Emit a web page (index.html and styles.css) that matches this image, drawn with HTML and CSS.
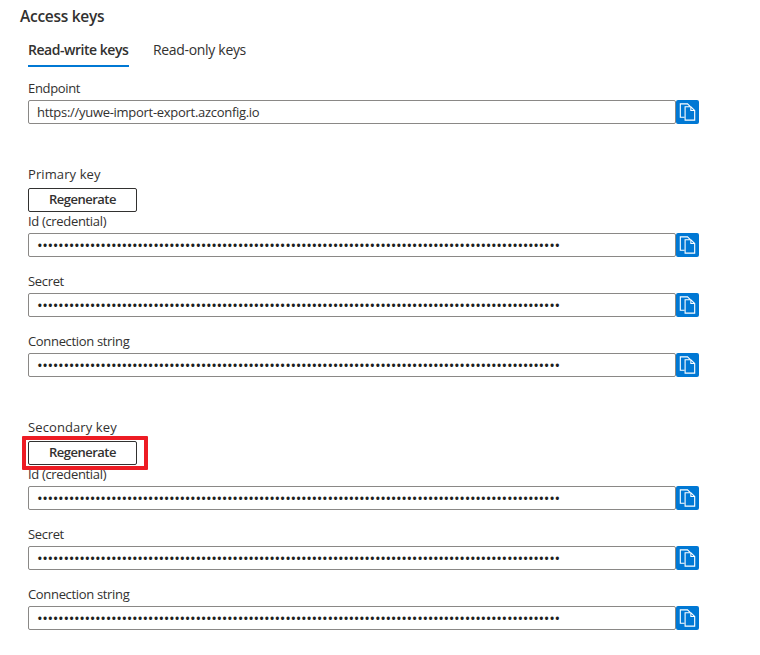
FILE: index.html
```html
<!DOCTYPE html>
<html lang="en">
<head>
<meta charset="utf-8">
<title>Access keys</title>
<link rel="stylesheet" href="styles.css">
</head>
<body>
<svg class="defs" aria-hidden="true">
  <symbol id="copy" viewBox="0 0 24 24">
    <path d="M9 17.500H4.500V3.500H12L15 6.500" />
    <path d="M9.500 6.500H15.500L19.500 10.500V20.500H9.500Z M15.500 6.500V10.500H19.500" />
  </symbol>
</svg>
<main class="panel">
  <h1 class="title">Access keys</h1>
  <nav class="tabs">
    <a class="tab tab-active">Read-write keys</a>
    <a class="tab">Read-only keys</a>
  </nav>
  <section class="group">
    <div class="field"><label class="label">Endpoint</label>
      <div class="row"><div class="input url">https://yuwe-import-export.azconfig.io</div><button class="copy"><svg><use href="#copy"/></svg></button></div></div>
  </section>
  <section class="group">
    <h2 class="label heading">Primary key</h2>
    <div class="action"><button class="regen">Regenerate</button></div>
    <div class="field"><label class="label">Id (credential)</label>
      <div class="row"><div class="input dots"></div><button class="copy"><svg><use href="#copy"/></svg></button></div></div>
    <div class="field"><label class="label">Secret</label>
      <div class="row"><div class="input dots"></div><button class="copy"><svg><use href="#copy"/></svg></button></div></div>
    <div class="field"><label class="label">Connection string</label>
      <div class="row"><div class="input dots"></div><button class="copy"><svg><use href="#copy"/></svg></button></div></div>
  </section>
  <section class="group">
    <h2 class="label heading">Secondary key</h2>
    <div class="action highlighted"><button class="regen">Regenerate</button></div>
    <div class="field"><label class="label">Id (credential)</label>
      <div class="row"><div class="input dots"></div><button class="copy"><svg><use href="#copy"/></svg></button></div></div>
    <div class="field"><label class="label">Secret</label>
      <div class="row"><div class="input dots"></div><button class="copy"><svg><use href="#copy"/></svg></button></div></div>
    <div class="field"><label class="label">Connection string</label>
      <div class="row"><div class="input dots"></div><button class="copy"><svg><use href="#copy"/></svg></button></div></div>
  </section>
</main>
<script src="fields.js"></script>
</body>
</html>
```
FILE: fields.js
```js
document.querySelectorAll('.dots').forEach(function (el) {
  el.textContent = '•'.repeat(99);
});
```
FILE: styles.css
```css
*, *::after { box-sizing: border-box; }
body { margin: 0; background: #fff; color: #323130; font: 13px/18px "Open Sans", "Noto Sans", sans-serif; }
.defs { display: none; }
.panel { width: 699px; padding: 6px 0 0 28px; }
.title { margin: 0 0 0 -8px; font-size: 15.5px; line-height: 20px; font-weight: 600; letter-spacing: -0.28px; color: #323130; }
.tabs { display: flex; gap: 24px; height: 41px; padding-top: 13px; }
.tab { height: 28px; line-height: 22px; font-size: 14px; letter-spacing: -0.32px; white-space: nowrap; }
.tab-active { width: 101px; font-weight: 600; border-bottom: 2px solid #0078d4; letter-spacing: -0.47px; }
.group { margin-bottom: 41px; }
.group:first-of-type { padding-top: 12px; }
.label { display: block; height: 21px; margin: 0; font-size: 13px; font-weight: 400; letter-spacing: -0.33px; white-space: nowrap; }
.heading { height: 23px; letter-spacing: 0.1px; }
.field + .field { margin-top: 15px; }
.row { display: flex; height: 24px; }
.input { width: 648px; border: 1px solid #8a8886; border-radius: 2px; padding-left: 8px; line-height: 23px; white-space: nowrap; overflow: hidden; }
.url { letter-spacing: -0.29px; }
.dots { color: #201f1e; font-size: 15px; letter-spacing: -0.36px; }
.copy { width: 23px; height: 24px; padding: 0; border: 0; border-radius: 2px; background: #0078d4; }
.copy svg { display: block; width: 23px; height: 24px; fill: none; stroke: #fff; stroke-width: 1.15; }
.action { position: relative; height: 24px; width: 109px; }
.regen { display: block; width: 109px; height: 24px; padding: 0 0 2px; border: 1px solid #323130; border-radius: 2px; background: #fff; color: #323130; font: 600 13px/20px "Open Sans", sans-serif; letter-spacing: -0.5px; }
.highlighted::after { content: ""; position: absolute; left: -6px; top: -5px; width: 126px; height: 34px; border: 4px solid #ed1c24; border-radius: 1px; }
```
